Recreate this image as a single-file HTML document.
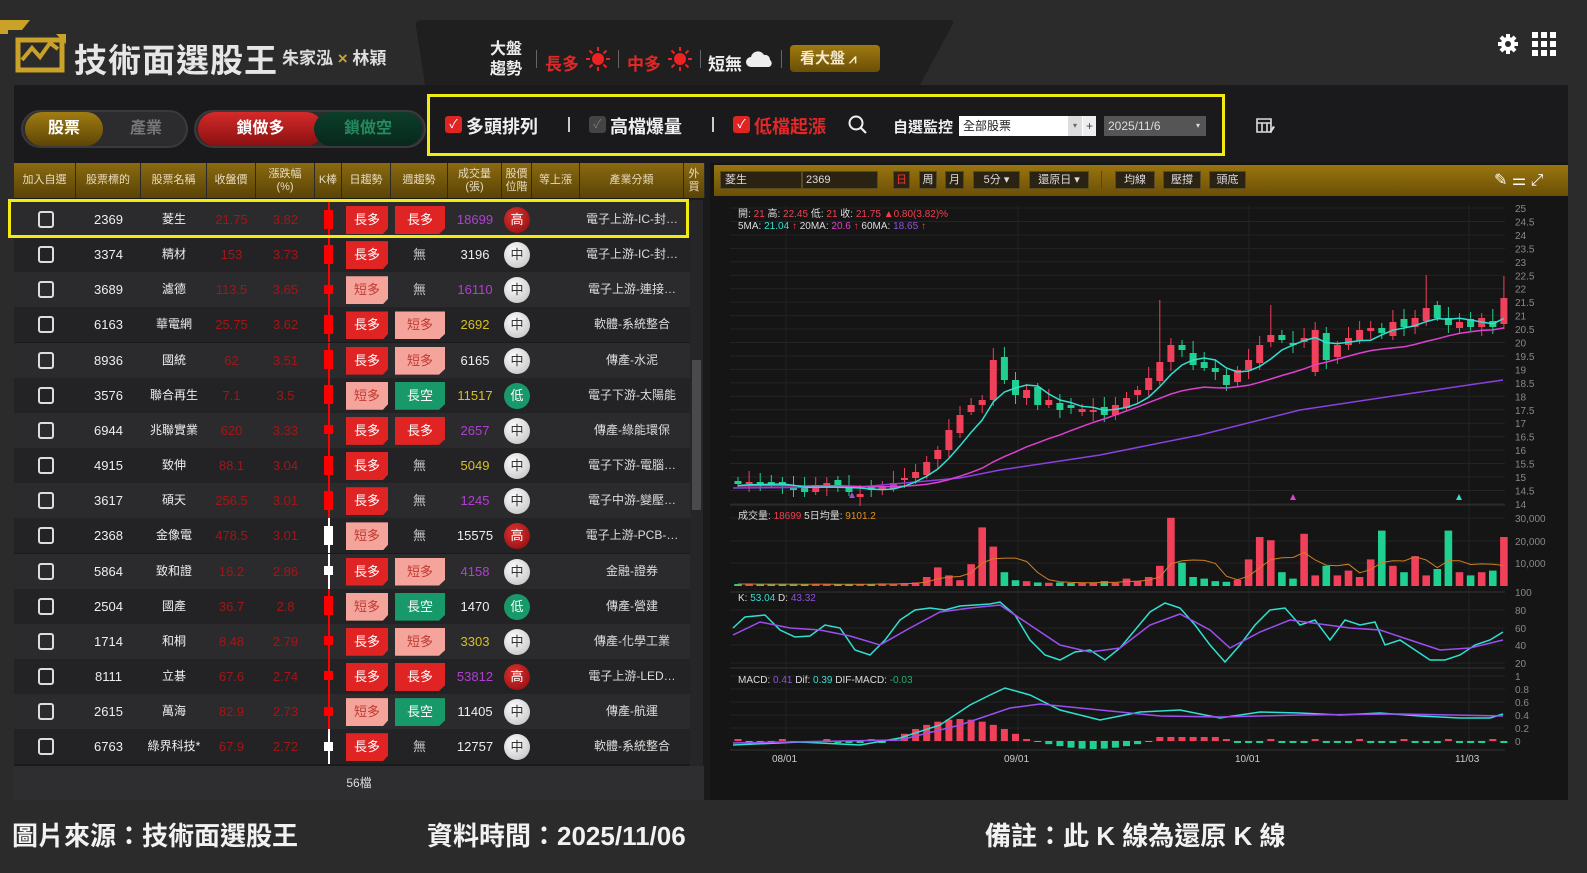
<!DOCTYPE html>
<html><head><meta charset="utf-8">
<style>
*{margin:0;padding:0;box-sizing:border-box}
body{width:1587px;height:873px;background:#2b2b2c;font-family:"Liberation Sans","Noto Sans CJK TC",sans-serif;color:#ddd;position:relative;overflow:hidden}
.a{position:absolute}
.tab{position:absolute;left:415px;top:20px;width:540px;height:70px;background:#1f1f20;clip-path:polygon(0 0,100% 0,93% 100%,2% 100%);border-radius:6px}
.main{position:absolute;left:14px;top:85px;width:1554px;height:715px;background:#1a1a1c}
.pill{position:absolute;height:38px;border-radius:19px;background:#2c2c2e;border:2px solid #3a3a3c}
.pill span{position:absolute;top:0;height:34px;line-height:34px;text-align:center;font-size:16px;font-weight:bold;border-radius:17px}
.th{position:absolute;top:163px;height:35px;background:linear-gradient(#8a6a10,#5a4306);font-size:11px;color:#e8dcc0;display:flex;align-items:center;justify-content:center;text-align:center;line-height:13px;border-right:1px solid #2a2a2a}
.row{position:absolute;left:14px;width:676px;height:35px;font-size:13px}
.c{position:absolute;top:0;height:35px;line-height:35px;text-align:center}
.cb{position:absolute;left:24px;top:9px;width:16px;height:17px;border:2px solid #ddd;border-radius:3px}
.tg{position:absolute;top:4px;height:28px;line-height:28px;width:42px;text-align:center;font-size:13px;clip-path:polygon(0 0,100% 0,100% 80%,88% 100%,0 100%)}
.L{background:#e02424;color:#fff}.S{background:#f5a49c;color:#c03a32}.G{background:#18996a;color:#fff}
.pos{position:absolute;left:490px;top:5px;width:26px;height:26px;border-radius:13px;line-height:26px;text-align:center;font-size:13px}
.M{background:radial-gradient(circle at 40% 35%,#fff,#bbb);color:#333}.H{background:radial-gradient(circle at 40% 35%,#d33,#8a0a0a);color:#fff}.D{background:#18996a;color:#fff}
.tb{position:absolute;top:171px;height:18px;background:#2a2212;border:1px solid #5a4a20;font-size:11px;color:#ddd;line-height:16px;text-align:center}
.cap{position:absolute;top:816px;font-size:26px;color:#f2f2f2;font-weight:bold}
</style></head><body>
<div class="tab"></div>
<svg class="a" style="left:0;top:18px" width="72" height="56" viewBox="0 0 72 56">
<path d="M0 2h30l-8 10H8v4H0z" fill="#c9a227"/>
<path d="M18 22h44v30H18z" fill="none" stroke="#c9a227" stroke-width="5"/>
<path d="M22 42l10-12 8 9 10-14 8 6" fill="none" stroke="#c9a227" stroke-width="4"/>
<path d="M56 16l10 0 0 10z" fill="#c9a227"/>
</svg>
<div class="a" style="left:74px;top:34px;font-size:33px;font-weight:bold;color:#e6e6e6;letter-spacing:1px">技術面選股王</div>
<div class="a" style="left:282px;top:44px;font-size:17px;font-weight:bold;color:#ddd">朱家泓 <span style="color:#c9a227">×</span> 林穎</div>
<div class="a" style="left:490px;top:40px;font-size:16px;font-weight:bold;color:#eee;line-height:20px">大盤<br>趨勢</div>
<div class="a" style="left:536px;top:50px;width:1px;height:18px;background:#666"></div>
<div class="a" style="left:545px;top:50px;font-size:17px;font-weight:bold;color:#e02828">長多</div>
<svg class="a" style="left:585px;top:46px" width="26" height="26" viewBox="0 0 26 26"><circle cx="13" cy="13" r="6" fill="#ee2222"/><g stroke="#ee2222" stroke-width="2"><path d="M13 1v4M13 21v4M1 13h4M21 13h4M4.5 4.5l3 3M18.5 18.5l3 3M4.5 21.5l3-3M18.5 7.5l3-3"/></g></svg>
<div class="a" style="left:618px;top:50px;width:1px;height:18px;background:#666"></div>
<div class="a" style="left:627px;top:50px;font-size:17px;font-weight:bold;color:#e02828">中多</div>
<svg class="a" style="left:667px;top:46px" width="26" height="26" viewBox="0 0 26 26"><circle cx="13" cy="13" r="6" fill="#ee2222"/><g stroke="#ee2222" stroke-width="2"><path d="M13 1v4M13 21v4M1 13h4M21 13h4M4.5 4.5l3 3M18.5 18.5l3 3M4.5 21.5l3-3M18.5 7.5l3-3"/></g></svg>
<div class="a" style="left:700px;top:50px;width:1px;height:18px;background:#666"></div>
<div class="a" style="left:708px;top:50px;font-size:17px;font-weight:bold;color:#eee">短無</div>
<svg class="a" style="left:746px;top:50px" width="28" height="18" viewBox="0 0 28 18"><path d="M5 17a5 5 0 010-10 7 7 0 0113-2 5 5 0 016 5 4 4 0 01-1 7z" fill="#eee"/></svg>
<div class="a" style="left:781px;top:50px;width:1px;height:18px;background:#666"></div>
<div class="a" style="left:790px;top:45px;width:90px;height:27px;border-radius:4px;background:linear-gradient(#a07a10,#6a4f06);font-size:15px;font-weight:bold;color:#f4ead0;line-height:27px;padding-left:10px">看大盤 <span style="font-size:13px">⩘</span></div>
<svg class="a" style="left:1498px;top:34px" width="20" height="20" viewBox="0 0 20 20"><g fill="#fff"><circle cx="10" cy="10" r="7"/><rect x="8" y="0" width="4" height="20"/><rect x="0" y="8" width="20" height="4"/><rect x="8" y="0" width="4" height="20" transform="rotate(45 10 10)"/><rect x="8" y="0" width="4" height="20" transform="rotate(-45 10 10)"/></g><circle cx="10" cy="10" r="3" fill="#2b2b2c"/></svg>
<svg class="a" style="left:1532px;top:32px" width="24" height="24" viewBox="0 0 24 24"><g fill="#fff"><rect x="0" y="0" width="6" height="6"/><rect x="9" y="0" width="6" height="6"/><rect x="18" y="0" width="6" height="6"/><rect x="0" y="9" width="6" height="6"/><rect x="9" y="9" width="6" height="6"/><rect x="18" y="9" width="6" height="6"/><rect x="0" y="18" width="6" height="6"/><rect x="9" y="18" width="6" height="6"/><rect x="18" y="18" width="6" height="6"/></g></svg>

<div class="main"></div>
<div class="pill" style="left:21px;top:110px;width:167px"><span style="left:2px;width:78px;background:linear-gradient(#a07c12,#5e4506);color:#fff">股票</span><span style="left:84px;width:78px;color:#777">產業</span></div>
<div class="pill" style="left:194px;top:110px;width:232px"><span style="left:2px;width:125px;background:linear-gradient(#d42a2a,#8a1010);color:#fff">鎖做多</span><span style="left:118px;width:108px;background:linear-gradient(#0c3e2a,#08281c);color:#248a5e">鎖做空</span></div>
<div class="a" style="left:427px;top:94px;width:798px;height:62px;border:3px solid #f2ea10"></div>
<div class="a" style="left:445px;top:116px;width:17px;height:17px;background:#e02424;border-radius:3px;color:#fff;font-size:12px;line-height:17px;text-align:center">✓</div>
<div class="a" style="left:466px;top:113px;font-size:18px;font-weight:bold;color:#eee">多頭排列</div>
<div class="a" style="left:568px;top:117px;width:2px;height:15px;background:#ccc"></div>
<div class="a" style="left:589px;top:116px;width:17px;height:17px;background:#444;border-radius:3px;color:#777;font-size:12px;line-height:17px;text-align:center">✓</div>
<div class="a" style="left:610px;top:113px;font-size:18px;font-weight:bold;color:#eee">高檔爆量</div>
<div class="a" style="left:712px;top:117px;width:2px;height:15px;background:#ccc"></div>
<div class="a" style="left:733px;top:116px;width:17px;height:17px;background:#e02424;border-radius:3px;color:#fff;font-size:12px;line-height:17px;text-align:center">✓</div>
<div class="a" style="left:754px;top:113px;font-size:18px;font-weight:bold;color:#e02828">低檔起漲</div>
<svg class="a" style="left:848px;top:115px" width="20" height="20" viewBox="0 0 20 20"><circle cx="8" cy="8" r="6.5" fill="none" stroke="#eee" stroke-width="2"/><path d="M13 13l5 5" stroke="#eee" stroke-width="2.2"/></svg>
<div class="a" style="left:893px;top:116px;font-size:15px;font-weight:bold;color:#eee">自選監控</div>
<div class="a" style="left:959px;top:116px;width:137px;height:20px;background:#fff;font-size:12px;color:#222;line-height:20px;padding-left:4px">全部股票</div>
<div class="a" style="left:1068px;top:116px;width:14px;height:20px;background:#ddd;font-size:8px;color:#666;line-height:20px;text-align:center">▾</div>
<div class="a" style="left:1083px;top:116px;width:13px;height:20px;background:#eee;font-size:12px;color:#444;line-height:20px;text-align:center">+</div>
<div class="a" style="left:1104px;top:116px;width:102px;height:20px;background:#555;font-size:12px;color:#ddd;line-height:20px;padding-left:4px">2025/11/6<span style="position:absolute;right:6px;font-size:8px">▾</span></div>
<svg class="a" style="left:1256px;top:118px" width="20" height="16" viewBox="0 0 20 16"><path d="M1 1h14v13H1zM1 5h14M6 5v9M11 5v9" fill="none" stroke="#ddd" stroke-width="1.6"/><path d="M13 14l4-6 2 1-4 6z" fill="#ddd"/></svg>

<div class="th" style="left:14px;width:62px">加入自選</div>
<div class="th" style="left:76px;width:65px">股票標的</div>
<div class="th" style="left:141px;width:66px">股票名稱</div>
<div class="th" style="left:207px;width:49px">收盤價</div>
<div class="th" style="left:256px;width:59px">漲跌幅<br>(%)</div>
<div class="th" style="left:315px;width:27px">K棒</div>
<div class="th" style="left:342px;width:49px">日趨勢</div>
<div class="th" style="left:391px;width:57px">週趨勢</div>
<div class="th" style="left:448px;width:54px">成交量<br>(張)</div>
<div class="th" style="left:502px;width:30px">股價<br>位階</div>
<div class="th" style="left:532px;width:48px">等上漲</div>
<div class="th" style="left:580px;width:104px">產業分類</div>
<div class="th" style="left:684px;width:21px">外<br>買</div>
<div id="rows"></div>
<div class="a" style="left:690px;top:200px;width:13px;height:566px;background:#262628"></div>
<div class="a" style="left:692px;top:360px;width:9px;height:150px;background:#4a4a4c"></div>
<div class="a" style="left:14px;top:766px;width:690px;height:34px;background:#2e2e30;text-align:center;font-size:12px;line-height:34px;color:#ddd">56檔</div>
<div class="a" style="left:8px;top:199px;width:681px;height:39px;border:3px solid #f2ea10"></div>

<div class="a" style="left:710px;top:163px;width:858px;height:637px;background:#151515"></div>
<div class="a" style="left:714px;top:165px;width:854px;height:31px;background:linear-gradient(#9a7510,#6a4f06)"></div>
<div class="tb" style="left:720px;width:82px;text-align:left;padding-left:4px">菱生</div>
<div class="tb" style="left:802px;width:76px;text-align:left;padding-left:3px">2369</div>
<div class="tb" style="left:893px;width:17px;color:#e33">日</div>
<div class="tb" style="left:919px;width:18px">周</div>
<div class="tb" style="left:945px;width:19px">月</div>
<div class="tb" style="left:973px;width:47px">5分 ▾</div>
<div class="tb" style="left:1029px;width:60px">還原日 ▾</div>
<div class="a" style="left:1101px;top:171px;width:1px;height:18px;background:#a02020"></div>
<div class="tb" style="left:1115px;width:40px">均線</div>
<div class="tb" style="left:1163px;width:38px">壓撐</div>
<div class="tb" style="left:1209px;width:37px">頭底</div>
<div class="a" style="left:1494px;top:170px;font-size:16px;color:#fff">✎ ⚌ ⤢</div>
<svg id="ch" class="a" style="left:0;top:0" width="1587" height="873"></svg>

<div class="cap" style="left:12px">圖片來源：技術面選股王</div>
<div class="cap" style="left:427px">資料時間：2025/11/06</div>
<div class="cap" style="left:985px">備註：此 K 線為還原 K 線</div>

<script>
var D=[["2369","菱生","21.75","3.82","L","L","18699","#b040d0","H","電子上游-IC-封…","r"],
["3374","精材","153","3.73","L","N","3196","#eee","M","電子上游-IC-封…","r"],
["3689","濾德","113.5","3.65","S","N","16110","#b040d0","M","電子上游-連接…","s"],
["6163","華電網","25.75","3.62","L","S","2692","#d8c020","M","軟體-系統整合","r"],
["8936","國統","62","3.51","L","S","6165","#eee","M","傳產-水泥","r"],
["3576","聯合再生","7.1","3.5","S","G","11517","#d8c020","D","電子下游-太陽能","r"],
["6944","兆聯實業","620","3.33","L","L","2657","#b040d0","M","傳產-綠能環保","s"],
["4915","致伸","88.1","3.04","L","N","5049","#d8c020","M","電子下游-電腦…","r"],
["3617","碩天","256.5","3.01","L","N","1245","#b040d0","M","電子中游-變壓…","r"],
["2368","金像電","478.5","3.01","S","N","15575","#eee","H","電子上游-PCB-…","w"],
["5864","致和證","16.2","2.86","L","S","4158","#b040d0","M","金融-證券","ws"],
["2504","國產","36.7","2.8","S","G","1470","#eee","D","傳產-營建","r"],
["1714","和桐","8.48","2.79","L","S","3303","#d8c020","M","傳產-化學工業","s"],
["8111","立碁","67.6","2.74","L","L","53812","#b040d0","H","電子上游-LED…","s"],
["2615","萬海","82.9","2.73","S","G","11405","#eee","M","傳產-航運","s"],
["6763","綠界科技*","67.9","2.72","L","N","12757","#eee","M","軟體-系統整合","ws"]];
var T={L:"長多",S:"短多",G:"長空",N:"無"};
var h="";
D.forEach(function(r,i){
 var y=202+i*35.15;
 var bg=i%2?"#232325":"#2b2b2d";
 h+='<div class="row" style="top:'+y+'px;background:'+bg+'">';
 h+='<div class="cb"></div>';
 h+='<div class="c" style="left:62px;width:65px;color:#eee">'+r[0]+'</div>';
 h+='<div class="c" style="left:127px;width:66px;color:#eee;font-size:12px">'+r[1]+'</div>';
 h+='<div class="c" style="left:193px;width:49px;color:#a51515">'+r[2]+'</div>';
 h+='<div class="c" style="left:242px;width:59px;color:#a51515">'+r[3]+'</div>';
 var kc=r[10][0]=="w"?"#fff":"#f00";
 h+='<div class="a" style="left:314px;top:0;width:1.5px;height:35px;background:'+kc+'"></div>';
 var kh=r[10].indexOf("s")>=0?9:19;
 h+='<div class="a" style="left:310px;top:'+(17-kh/2)+'px;width:9px;height:'+kh+'px;background:'+kc+'"></div>';
 h+='<div class="tg '+r[4]+'" style="left:332px">'+T[r[4]]+'</div>';
 if(r[5]=="N")h+='<div class="c" style="left:377px;width:57px;color:#ccc">無</div>';
 else h+='<div class="tg '+r[5]+'" style="left:381px;width:50px">'+T[r[5]]+'</div>';
 h+='<div class="c" style="left:434px;width:54px;color:'+r[7]+'">'+r[6]+'</div>';
 h+='<div class="pos '+r[8]+'">'+({H:"高",M:"中",D:"低"})[r[8]]+'</div>';
 h+='<div class="c" style="left:566px;width:104px;color:#ddd;font-size:12px">'+r[9]+'</div>';
 h+='</div>';
});
document.getElementById("rows").innerHTML=h;

var s="";
function ln(x1,y1,x2,y2,c,w){s+='<line x1="'+x1+'" y1="'+y1+'" x2="'+x2+'" y2="'+y2+'" stroke="'+c+'" stroke-width="'+(w||1)+'"/>';}
function tx(x,y,t,c,fs){s+='<text x="'+x+'" y="'+y+'" fill="'+c+'" font-size="'+(fs||10)+'" font-family="Liberation Sans,Noto Sans CJK TC,sans-serif">'+t+'</text>';}
for(var i=0;i<=22;i++){var p=25-i*0.5,y=208+i*13.45;ln(730,y,1505,y,"#242424");tx(1515,y+4,(p%1?p:p.toFixed(0)),"#888",10);}
[786,1018,1249,1469].forEach(function(x){ln(x,205,x,750,"#222");});
[["30,000",518],["20,000",541],["10,000",563],["100",592]].forEach(function(a){tx(1515,a[1]+4,a[0],"#888",10);ln(730,a[1],1505,a[1],"#242424")});
[["80",610],["60",628],["40",645],["20",663]].forEach(function(a){tx(1515,a[1]+4,a[0],"#888",10);ln(730,a[1],1505,a[1],"#242424")});
[["1",676],["0.8",689],["0.6",702],["0.4",715],["0.2",728],["0",741]].forEach(function(a){tx(1515,a[1]+4,a[0],"#888",10);ln(730,a[1],1505,a[1],"#242424")});
ln(730,505,1505,505,"#333");ln(730,592,1505,592,"#333");ln(730,668,1505,668,"#333");ln(730,750,1505,750,"#333");
tx(772,762,"08/01","#ccc",10);tx(1004,762,"09/01","#ccc",10);tx(1235,762,"10/01","#ccc",10);tx(1455,762,"11/03","#ccc",10);
tx(738,217,'開: <tspan fill="#f04050">21</tspan> 高: <tspan fill="#f04050">22.45</tspan> 低: <tspan fill="#f04050">21</tspan> 收: <tspan fill="#f04050">21.75</tspan>  <tspan fill="#f04050">▲0.80(3.82)%</tspan>',"#ddd",10);
tx(738,229,'5MA: <tspan fill="#30e0d0">21.04</tspan>  <tspan fill="#f04050">↑</tspan> 20MA: <tspan fill="#e040d0">20.6</tspan>  <tspan fill="#f04050">↑</tspan> 60MA: <tspan fill="#9050e0">18.65</tspan>  <tspan fill="#f04050">↑</tspan>',"#ddd",10);
tx(738,519,'成交量: <tspan fill="#f04050">18699</tspan>  5日均量: <tspan fill="#e09020">9101.2</tspan>',"#ddd",10);
tx(738,601,'K: <tspan fill="#30e0d0">53.04</tspan>  D: <tspan fill="#9050e0">43.32</tspan>',"#ddd",10);
tx(738,683,'MACD: <tspan fill="#9050e0">0.41</tspan>  Dif: <tspan fill="#30e0d0">0.39</tspan>  DIF-MACD: <tspan fill="#20b070">-0.03</tspan>',"#ddd",10);
var C=[484,482,485,484,485,490,492,485,483,486,492,494,490,486,483,478,472,462,450,430,415,405,400,360,380,395,390,405,400,410,408,409,410,415,405,398,390,378,362,345,350,365,368,372,385,370,360,345,335,340,345,338,330,360,345,338,330,328,333,322,327,318,308,318,325,322,327,318,327,298];
var V=[.3,.3,.2,.3,.3,.3,.2,.3,.3,.2,.2,.3,.3,.5,.3,.6,.8,2.5,5.5,3,1.5,6.5,18,12,4,1.5,1.2,.8,.7,.8,.6,.7,.8,1.2,.7,2,1.3,2.5,6,21,7,2.5,2,1.2,1,1.6,8,15,14,4,2,16,3,6,3,4.5,2.5,8,17,6,4,9,3,5,17,4,3,4,4.5,15];
var R="#f0405a",G="#20d090";
var prev=486;
for(var i=0;i<C.length;i++){
 var x=738+i*11.1,c=C[i],o=i==23?400:(i==39?362:(i==52?372:prev+(i%3-1)*3));
 if(Math.abs(o-c)<2)o=c+(i%2?3:-3);
 var up=c<o,col=up?R:G,t=Math.min(o,c),b=Math.max(o,c);
 var hi=t-4-(i*7%9),lo=b+3+(i*5%7);
 if(i==62)hi=275;if(i==69)hi=276;if(i==48)hi=305;if(i==38)hi=300;
 ln(x,hi,x,lo,col);s+='<rect x="'+(x-3.5)+'" y="'+t+'" width="7" height="'+Math.max(b-t,1.5)+'" fill="'+col+'"/>';
 var vh=V[i]*3.2+1;s+='<rect x="'+(x-3.8)+'" y="'+(586-vh)+'" width="7.6" height="'+vh+'" fill="'+col+'"/>';
 prev=c;
}
function ma(n){var p=[];for(var i=0;i<C.length;i++){var sm=0;for(var k=i-n+1;k<=i;k++)sm+=(k<0?486:C[k]);p.push((738+i*11.1).toFixed(1)+","+(sm/n).toFixed(1));}return p.join(" ");}
function vma(n){var p=[];for(var i=0;i<V.length;i++){var sm=0;for(var k=i-n+1;k<=i;k++)sm+=(k<0?.3:V[k]);p.push((738+i*11.1).toFixed(1)+","+(586-sm/n*3.2-1).toFixed(1));}return p.join(" ");}
s+='<polyline points="733,488 860,487 960,478 1000,470 1100,455 1200,435 1300,410 1400,395 1503,380" fill="none" stroke="#8a40e0" stroke-width="1.5"/>';
s+='<polyline points="'+ma(20)+'" fill="none" stroke="#e040d0" stroke-width="1.5"/>';
s+='<polyline points="'+ma(5)+'" fill="none" stroke="#30e0d0" stroke-width="1.5"/>';
s+='<polyline points="'+vma(5)+'" fill="none" stroke="#d08020" stroke-width="1"/>';
s+='<path d="M1290 500l3-6 3 6z" fill="#e040d0"/><path d="M1456 500l3-6 3 6z" fill="#30e0d0"/><path d="M849 498l3-6 3 6z" fill="#9050e0"/>';
s+='<polyline points="733,628 745,617 765,615 780,630 795,637 810,636 825,625 840,628 855,650 870,655 885,640 900,620 915,610 930,608 945,610 960,606 975,605 990,604 1000,602 1015,615 1030,640 1045,655 1060,660 1075,652 1090,650 1105,660 1120,648 1135,630 1150,612 1165,603 1180,608 1195,625 1210,645 1225,662 1240,645 1255,625 1270,610 1285,608 1300,625 1315,620 1330,640 1345,620 1360,625 1375,622 1385,645 1400,640 1415,650 1430,660 1445,660 1460,655 1475,645 1490,640 1503,632" fill="none" stroke="#30e0d0" stroke-width="1.5"/>';
s+='<polyline points="733,635 760,622 790,628 820,630 850,636 880,645 910,628 940,612 970,608 1000,605 1030,625 1060,645 1090,652 1120,648 1150,625 1180,614 1210,630 1230,648 1260,632 1290,620 1320,624 1350,628 1380,630 1410,640 1440,650 1470,648 1503,640" fill="none" stroke="#9a50f0" stroke-width="1.5"/>';
for(var i=0;i<C.length;i++){var x=738+i*11.1,v;
 if(i>=14&&i<=26)v=-(Math.sin((i-14)/12*Math.PI)*20+2);else if(i>=27&&i<=37)v=Math.sin((i-27)/10*Math.PI)*7+1;else if(i>=38&&i<=43)v=-4;else v=(i%4?2:-2);
 s+='<rect x="'+(x-3.5)+'" y="'+(v<0?741+v:741)+'" width="7" height="'+Math.abs(v)+'" fill="'+(v<0?R:G)+'"/>';}
s+='<polyline points="733,745 800,742 860,745 900,738 940,725 970,705 990,695 1005,688 1030,695 1060,710 1100,720 1140,712 1180,710 1220,718 1260,712 1300,713 1340,715 1380,713 1420,716 1460,718 1490,718 1503,714" fill="none" stroke="#30e0d0" stroke-width="1.5"/>';
s+='<polyline points="733,743 900,740 960,725 1010,708 1040,704 1100,710 1160,716 1220,717 1300,715 1400,714 1503,716" fill="none" stroke="#9a50f0" stroke-width="1.5"/>';
document.getElementById("ch").innerHTML=s;
</script>
</body></html>
